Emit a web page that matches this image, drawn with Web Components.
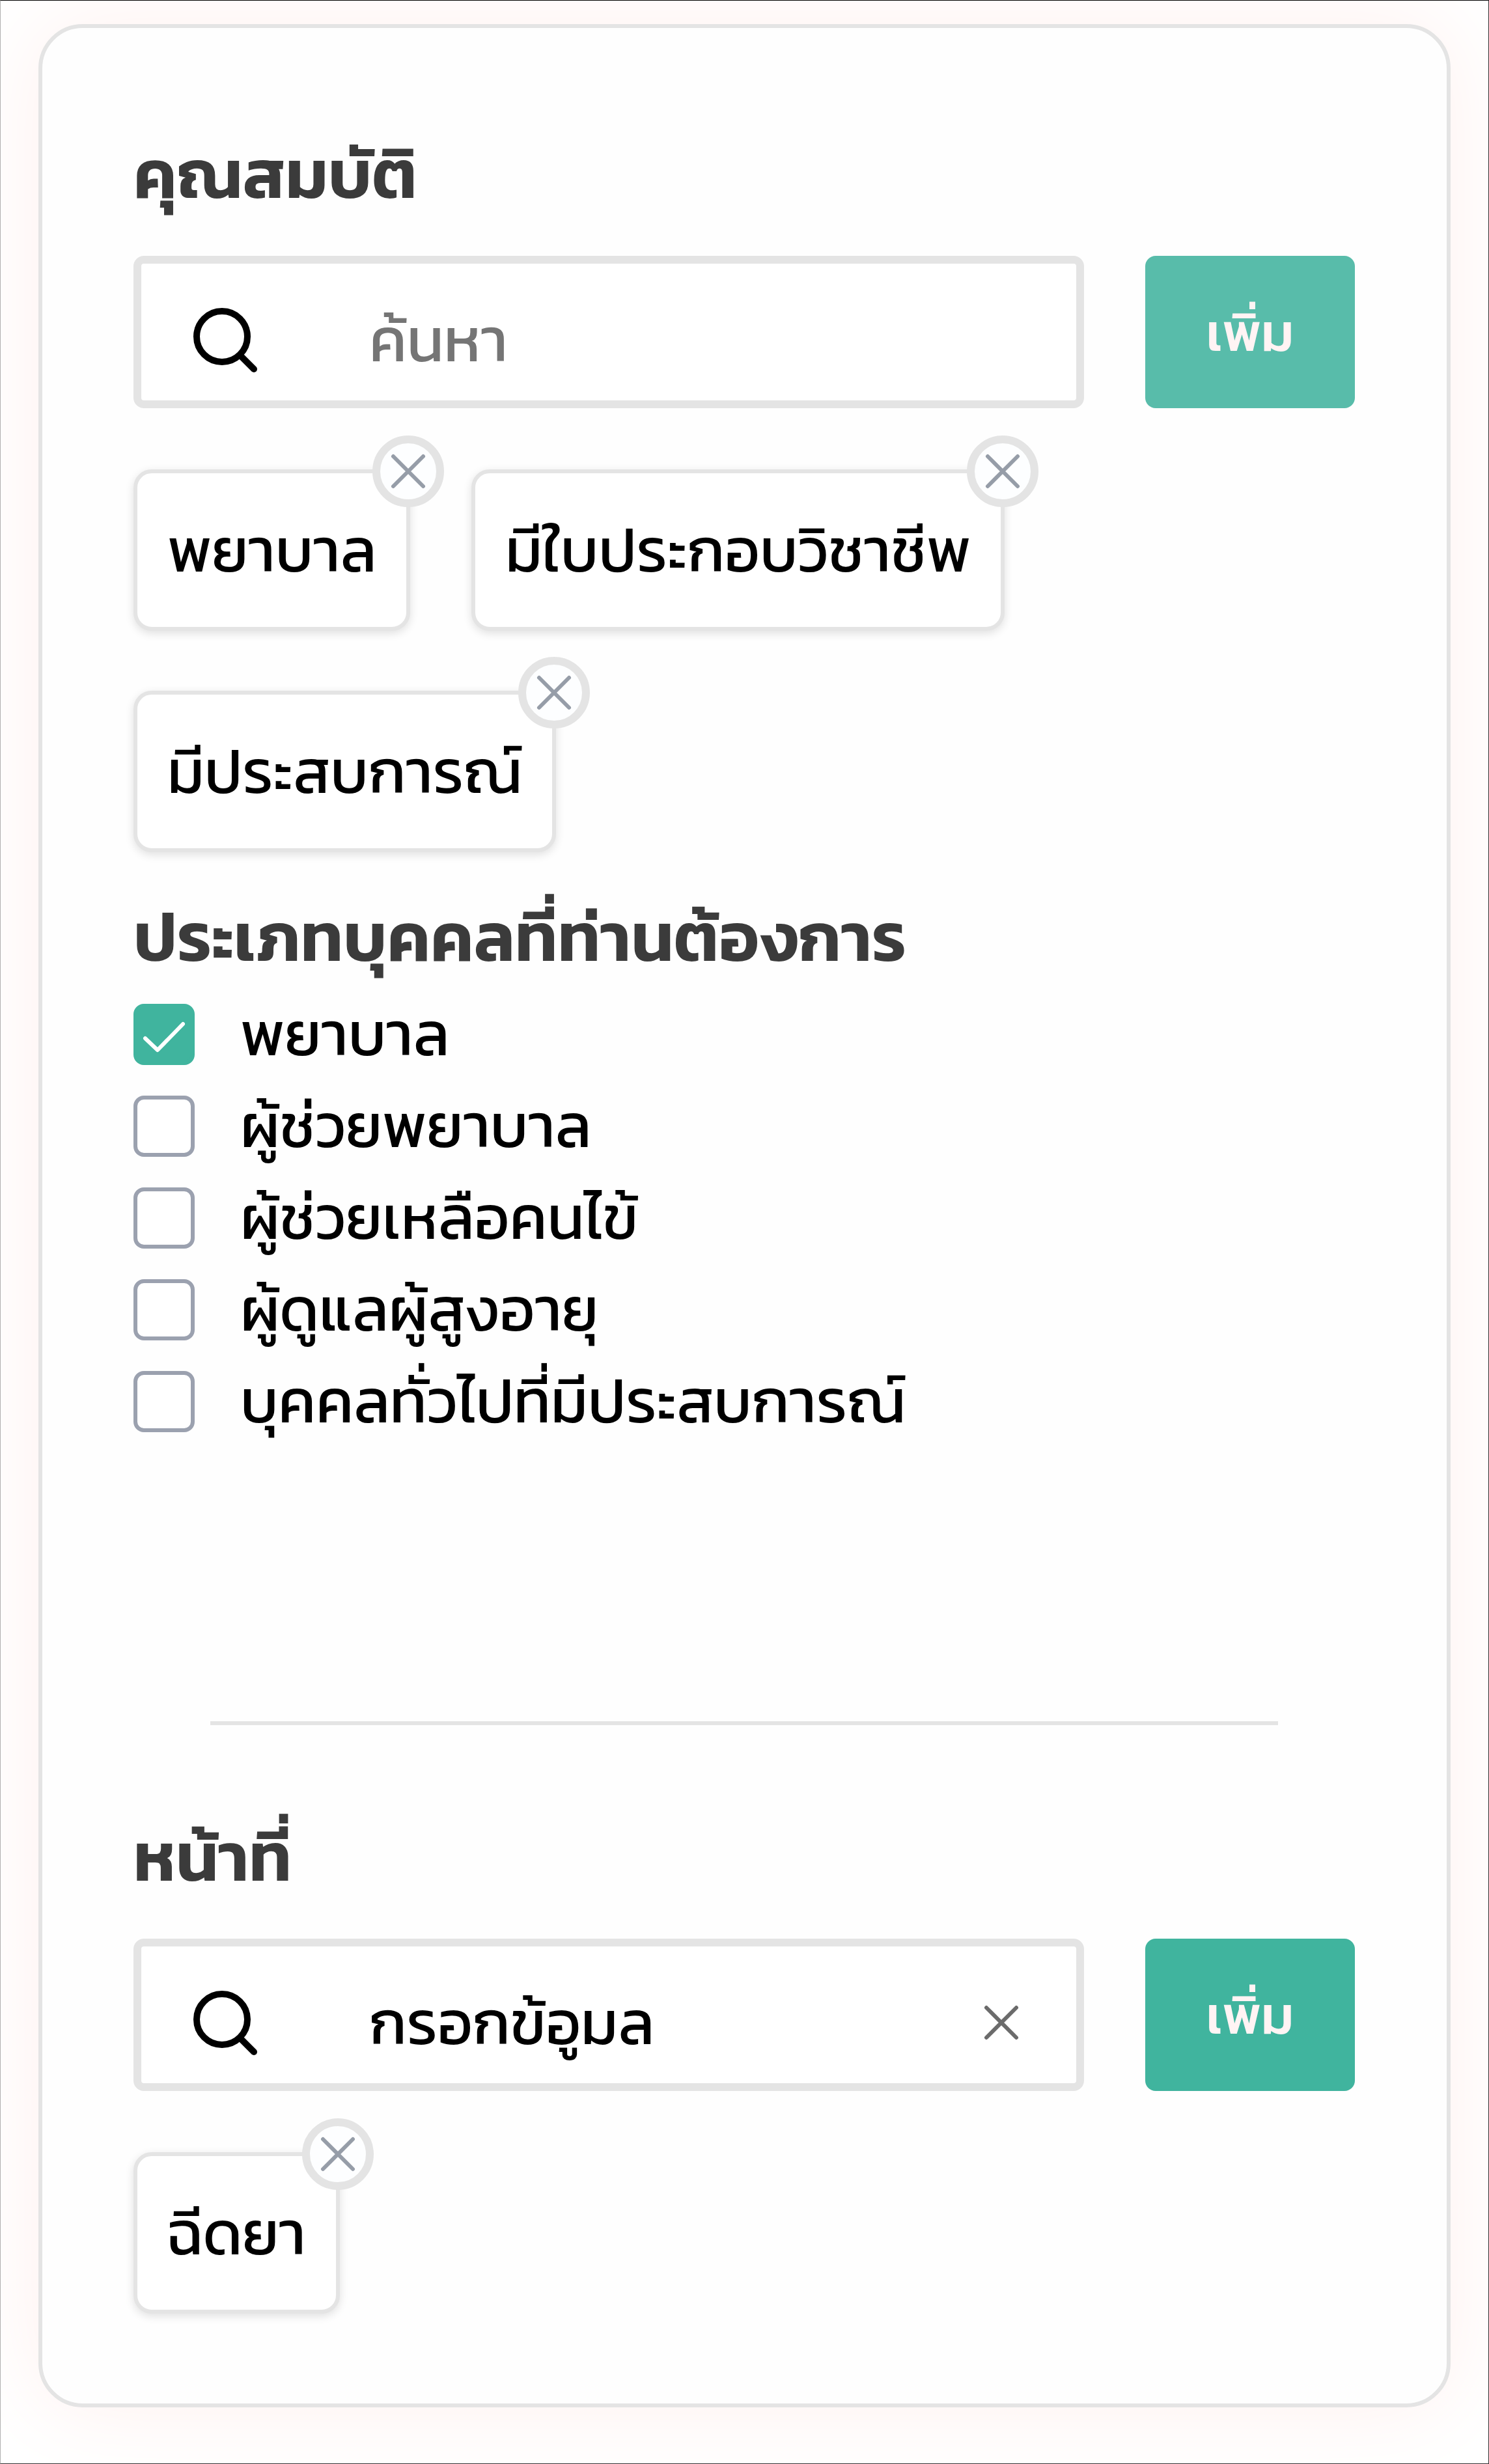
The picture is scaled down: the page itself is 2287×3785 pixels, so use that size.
<!DOCTYPE html>
<html lang="th">
<head>
<meta charset="utf-8">
<meta name="viewport" content="width=device-width, initial-scale=1">
<title>คุณสมบัติ</title>
<style>
  * {
    box-sizing: border-box;
  }
  body {
    margin: 0;
    min-height: 100vh;
    padding: 36px 58px 86px;
    border: 1px solid #333;
    border-top-color: #000;
    border-left-color: #b0b0b0;
    background: #fff;
    font-family: Kanit, Prompt, "Noto Sans Thai", "Noto Sans", "DejaVu Sans", sans-serif;
    font-size: 94px;
    color: #000;
  }
</style>
</head>
<body>

<form-card>
  <form-section heading="คุณสมบัติ">
    <search-bar placeholder="ค้นหา" muted></search-bar>
    <tag-list>
      <tag-chip>พยาบาล</tag-chip>
      <tag-chip>มีใบประกอบวิชาชีพ</tag-chip>
      <tag-chip>มีประสบการณ์</tag-chip>
    </tag-list>
  </form-section>
  <form-section heading="ประเภทบุคคลที่ท่านต้องการ" compact>
    <check-option checked>พยาบาล</check-option>
    <check-option>ผู้ช่วยพยาบาล</check-option>
    <check-option>ผู้ช่วยเหลือคนไข้</check-option>
    <check-option>ผู้ดูแลผู้สูงอายุ</check-option>
    <check-option>บุคคลทั่วไปที่มีประสบการณ์</check-option>
  </form-section>
  <section-divider></section-divider>
  <form-section heading="หน้าที่">
    <search-bar value="กรอกข้อูมล" placeholder="ค้นหา"></search-bar>
    <tag-list>
      <tag-chip>ฉีดยา</tag-chip>
    </tag-list>
  </form-section>
</form-card>

<script>
class FormCard extends HTMLElement {
  constructor() {
    super();
    this.attachShadow({ mode: 'open' });
    this.shadowRoot.innerHTML = `
      <style>
        :host {
          display: block;
          box-sizing: border-box;
          padding: 154px 141px 138px 140px;
          border: 6px solid #e4e4e4;
          border-radius: 68px;
          background: #fefefe;
          box-shadow: 0 0 140px #fff0ee;
        }
      </style>
      <slot></slot>
    `;
  }
}

class FormSection extends HTMLElement {
  constructor() {
    super();
    this.attachShadow({ mode: 'open' });
  }

  connectedCallback() {
    this.shadowRoot.innerHTML = `
      <style>
        :host {
          display: block;
        }
        h2 {
          margin: 0 0 56px;
          font-size: 105px;
          line-height: 140px;
          font-weight: 600;
          color: #3b3b3b;
        }
        :host([compact]) h2 {
          margin: 60px 0 9px;
        }
      </style>
      <h2>${this.getAttribute('heading')}</h2>
      <slot></slot>
    `;
  }
}

class SearchBar extends HTMLElement {
  constructor() {
    super();
    this.attachShadow({ mode: 'open' });
  }

  connectedCallback() {
    const value = this.getAttribute('value') || '';
    const placeholder = this.getAttribute('placeholder') || '';

    this.shadowRoot.innerHTML = `
      <style>
        :host {
          display: flex;
          gap: 94px;
          height: 234px;
        }
        .field {
          flex: 1;
          min-width: 0;
          display: flex;
          align-items: center;
          box-sizing: border-box;
          padding: 0 80px;
          border: 12px solid #e4e4e4;
          border-radius: 16px;
          background: #fff;
        }
        .search {
          flex: none;
          width: 100px;
          height: 100px;
          margin-top: 24px;
        }
        input {
          flex: 1;
          min-width: 0;
          height: 160px;
          margin: 0 0 0 170px;
          padding: 24px 0 0;
          border: 0;
          outline: 0;
          background: none;
          font: inherit;
          color: inherit;
        }
        input::placeholder {
          color: #757575;
          opacity: 1;
        }
        button {
          margin: 0;
          border: 0;
          cursor: pointer;
          font: inherit;
        }
        .clear {
          flex: none;
          width: 70px;
          height: 70px;
          padding: 0;
          margin-top: 24px;
          background: none;
        }
        .clear svg {
          display: block;
        }
        .add {
          flex: none;
          width: 322px;
          padding: 0;
          border-radius: 16px;
          background: #40b49e;
          color: #fff4f4;
          font-size: 82px;
          font-weight: 500;
        }
        :host([muted]) .add {
          background: #58bcaa;
        }
      </style>
      <div class="field">
        <svg class="search" viewBox="0 0 100 100" fill="none" stroke="#000" stroke-width="10" stroke-linecap="round" aria-hidden="true">
          <circle cx="44" cy="45" r="39"/>
          <path d="M72 74 93 95"/>
        </svg>
        <input type="text" aria-label="ค้นหา" placeholder="${placeholder}" value="${value}">
        ${value ? `
        <button class="clear" type="button" aria-label="ล้าง">
          <svg viewBox="0 0 70 70" fill="none" stroke="#6b6b6b" stroke-width="6" stroke-linecap="round" aria-hidden="true">
            <path d="M12 12 58 58M58 12 12 58"/>
          </svg>
        </button>` : ''}
      </div>
      <button class="add" type="button">เพิ่ม</button>
    `;
  }
}

class TagList extends HTMLElement {
  constructor() {
    super();
    this.attachShadow({ mode: 'open' });
    this.shadowRoot.innerHTML = `
      <style>
        :host {
          display: flex;
          flex-wrap: wrap;
          gap: 92px 94px;
          margin-top: 94px;
        }
      </style>
      <slot></slot>
    `;
  }
}

class TagChip extends HTMLElement {
  constructor() {
    super();
    this.attachShadow({ mode: 'open' });
  }

  connectedCallback() {
    this.shadowRoot.innerHTML = `
      <style>
        :host {
          position: relative;
          display: flex;
          align-items: center;
          box-sizing: border-box;
          height: 248px;
          padding: 0 46px;
          border: 6px solid #e4e4e4;
          border-radius: 28px;
          background: #fff;
          box-shadow: 0 4px 14px rgba(0, 0, 0, 0.12);
          white-space: nowrap;
        }
        /* sits centred on the top right corner */
        button {
          position: absolute;
          top: -58px;
          right: -58px;
          box-sizing: border-box;
          width: 110px;
          height: 110px;
          margin: 0;
          padding: 12px;
          border: 12px solid #e4e4e4;
          border-radius: 50%;
          background: #fdfeff;
          cursor: pointer;
        }
        svg {
          display: block;
        }
      </style>
      <slot></slot>
      <button type="button" aria-label="ลบ">
        <svg viewBox="0 0 62 62" fill="none" stroke="#969da8" stroke-width="6" stroke-linecap="round" aria-hidden="true">
          <path d="M8 8 54 54M54 8 8 54"/>
        </svg>
      </button>
    `;
  }
}

class CheckOption extends HTMLElement {
  constructor() {
    super();
    this.attachShadow({ mode: 'open' });
  }

  connectedCallback() {
    this.shadowRoot.innerHTML = `
      <style>
        :host {
          display: block;
        }
        label {
          display: flex;
          align-items: center;
          gap: 70px;
          height: 141px;
          line-height: 141px;
          cursor: pointer;
        }
        .box {
          flex: none;
          display: grid;
          width: 94px;
          height: 94px;
        }
        input, svg {
          grid-area: 1 / 1;
          width: 94px;
          height: 94px;
          margin: 0;
        }
        input {
          appearance: none;
          box-sizing: border-box;
          border: 6px solid #9ba1af;
          border-radius: 16px;
          background: #fff;
        }
        input:checked {
          border-color: #40b49e;
          background: #40b49e;
        }
        svg {
          visibility: hidden;
          pointer-events: none;
          z-index: 1;
        }
        input:checked + svg {
          visibility: visible;
        }
      </style>
      <label>
        <span class="box">
          <input type="checkbox" ${this.hasAttribute('checked') ? 'checked' : ''}>
          <svg viewBox="0 0 94 94" fill="none" stroke="#fff" stroke-width="6" stroke-linecap="round" stroke-linejoin="round" aria-hidden="true">
            <path d="M18 53 37 71 76 31"/>
          </svg>
        </span>
        <span><slot></slot></span>
      </label>
    `;
  }
}

class SectionDivider extends HTMLElement {
  constructor() {
    super();
    this.attachShadow({ mode: 'open' });
    this.shadowRoot.innerHTML = `
      <style>
        :host {
          display: block;
          height: 6px;
          margin: 421px 118px 132px;
          background: #e4e4e4;
        }
      </style>
    `;
  }
}

customElements.define('form-card', FormCard);
customElements.define('form-section', FormSection);
customElements.define('search-bar', SearchBar);
customElements.define('tag-list', TagList);
customElements.define('tag-chip', TagChip);
customElements.define('check-option', CheckOption);
customElements.define('section-divider', SectionDivider);
</script>
</body>
</html>
